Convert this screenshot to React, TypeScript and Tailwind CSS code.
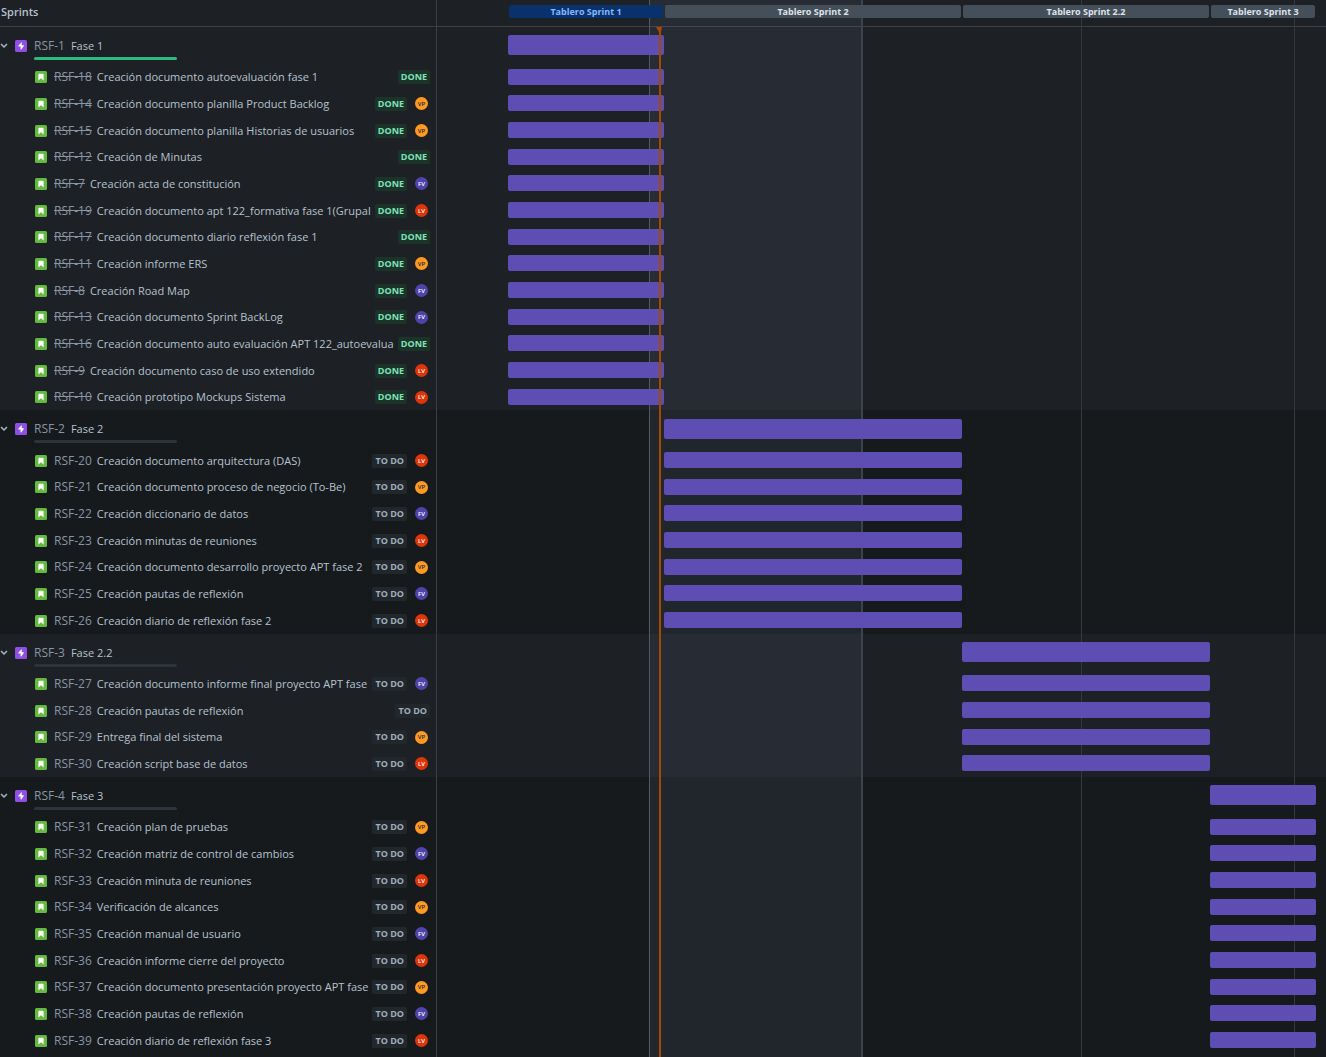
import React from "react";

type Person = "VP" | "FV" | "LV";
type Issue = { id: number; title: string; who?: Person };
type Phase = {
  id: number;
  title: string;
  done: boolean;
  start: number;
  end: number;
  surface: string;
  head: string;
  barTop: string;
  rows: string;
  issues: Issue[];
};

/* Timeline units: the visible range is 889 units wide. */
const RANGE = 889;
const pct = (n: number) => `${(n / RANGE) * 100}%`;

const phases: Phase[] = [
  {
    id: 1,
    title: "Fase 1",
    done: true,
    start: 71,
    end: 227,
    surface: "bg-[#1d2125]",
    head: "h-[37px]",
    barTop: "pt-2",
    rows: "auto-rows-[26px_27px_27px]",
    issues: [
      { id: 18, title: "Creación documento autoevaluación fase 1" },
      { id: 14, title: "Creación documento planilla Product Backlog", who: "VP" },
      { id: 15, title: "Creación documento planilla Historias de usuarios", who: "VP" },
      { id: 12, title: "Creación de Minutas" },
      { id: 7, title: "Creación acta de constitución", who: "FV" },
      { id: 19, title: "Creación documento apt 122_formativa fase 1(Grupal", who: "LV" },
      { id: 17, title: "Creación documento diario reflexión fase 1" },
      { id: 11, title: "Creación informe ERS", who: "VP" },
      { id: 8, title: "Creación Road Map", who: "FV" },
      { id: 13, title: "Creación documento Sprint BackLog", who: "FV" },
      { id: 16, title: "Creación documento auto evaluación APT 122_autoevalua" },
      { id: 9, title: "Creación documento caso de uso extendido", who: "LV" },
      { id: 10, title: "Creación prototipo Mockups Sistema", who: "LV" },
    ],
  },
  {
    id: 2,
    title: "Fase 2",
    done: false,
    start: 227,
    end: 525,
    surface: "bg-[#161a1d]",
    head: "h-[37px]",
    barTop: "pt-[9px]",
    rows: "auto-rows-[27px_26px_27px]",
    issues: [
      { id: 20, title: "Creación documento arquitectura (DAS)", who: "LV" },
      { id: 21, title: "Creación documento proceso de negocio (To-Be)", who: "VP" },
      { id: 22, title: "Creación diccionario de datos", who: "FV" },
      { id: 23, title: "Creación minutas de reuniones", who: "LV" },
      { id: 24, title: "Creación documento desarrollo proyecto APT fase 2", who: "VP" },
      { id: 25, title: "Creación pautas de reflexión", who: "FV" },
      { id: 26, title: "Creación diario de reflexión fase 2", who: "LV" },
    ],
  },
  {
    id: 3,
    title: "Fase 2.2",
    done: false,
    start: 525,
    end: 773,
    surface: "bg-[#1d2125]",
    head: "h-[36px]",
    barTop: "pt-2",
    rows: "auto-rows-[27px_27px_26px]",
    issues: [
      { id: 27, title: "Creación documento informe final proyecto APT fase", who: "FV" },
      { id: 28, title: "Creación pautas de reflexión" },
      { id: 29, title: "Entrega final del sistema", who: "VP" },
      { id: 30, title: "Creación script base de datos", who: "LV" },
    ],
  },
  {
    id: 4,
    title: "Fase 3",
    done: false,
    start: 773,
    end: 879,
    surface: "bg-[#161a1d]",
    head: "h-[37px]",
    barTop: "pt-2",
    rows: "auto-rows-[26px_27px_27px]",
    issues: [
      { id: 31, title: "Creación plan de pruebas", who: "VP" },
      { id: 32, title: "Creación matriz de control de cambios", who: "FV" },
      { id: 33, title: "Creación minuta de reuniones", who: "LV" },
      { id: 34, title: "Verificación de alcances", who: "VP" },
      { id: 35, title: "Creación manual de usuario", who: "FV" },
      { id: 36, title: "Creación informe cierre del proyecto", who: "LV" },
      { id: 37, title: "Creación documento presentación proyecto APT fase", who: "VP" },
      { id: 38, title: "Creación pautas de reflexión", who: "FV" },
      { id: 39, title: "Creación diario de reflexión fase 3", who: "LV" },
    ],
  },
];

const sprints = [
  { name: "Tablero Sprint 1", size: 156, active: true },
  { name: "Tablero Sprint 2", size: 298, active: false },
  { name: "Tablero Sprint 2.2", size: 248, active: false },
  { name: "Tablero Sprint 3", size: 106, active: false },
];

const avatarColors: Record<Person, string> = {
  VP: "bg-[#ff991f] text-[#172b4d]",
  FV: "bg-[#5243aa] text-white",
  LV: "bg-[#de350b] text-white",
};

function StoryIcon() {
  return (
    <svg className="size-3 shrink-0" viewBox="0 0 16 16" aria-hidden="true">
      <rect width="16" height="16" rx="2" fill="#63ba3c" />
      <path d="M5.500 3.500h5a1 1 0 0 1 1 1V12.500L8 9.500l-3.500 3V4.500a1 1 0 0 1 1-1z" fill="#fff" />
    </svg>
  );
}

function EpicIcon() {
  return (
    <svg className="size-3 shrink-0" viewBox="0 0 16 16" aria-hidden="true">
      <rect width="16" height="16" rx="2" fill="#904ee2" />
      <path d="M8.300 3.300 4.500 7.800c-.4.500-.1 1 .4 1H7.400v3.300c0 .8.600.9 1 .4l3.300-4.400c.4-.5.100-1-.4-1H9V3.700c0-.7-.4-.8-.7-.4z" fill="#fff" />
    </svg>
  );
}

function Chevron() {
  return (
    <svg className="h-2 w-2" viewBox="0 0 8 8" fill="none" stroke="#9fadbc" strokeWidth="1.700" strokeLinecap="round" strokeLinejoin="round" aria-hidden="true">
      <path d="M1.500 2.500 4 5l2.500-2.500" />
    </svg>
  );
}

function Status({ done }: { done: boolean }) {
  return (
    <span
      className={`flex h-[14px] shrink-0 items-center rounded-[2px] px-[3px] text-[9px] font-bold ${
        done ? "bg-[#1c3329] text-[#7ee2b8]" : "bg-[#22272b] text-[#9fadbc]"
      }`}
    >
      {done ? "DONE" : "TO DO"}
    </span>
  );
}

function IssueRow({ issue, done }: { issue: Issue; done: boolean }) {
  return (
    <li className="flex min-w-0 items-center pl-[35px]">
      <StoryIcon />
      <a href={`#RSF-${issue.id}`} className={`ml-[7px] shrink-0 text-[12px] text-[#8696a7] ${done ? "line-through" : ""}`}>
        RSF-{issue.id}
      </a>
      <span className="ml-[5px] min-w-0 flex-1 whitespace-nowrap">{issue.title}</span>
      <div className={`flex items-center gap-2 ${issue.who ? "pr-2" : "pr-[6px]"}`}>
        <Status done={done} />
        {issue.who && (
          <span className={`flex size-[13px] items-center justify-center rounded-full text-[6px] font-semibold ${avatarColors[issue.who]}`}>
            {issue.who}
          </span>
        )}
      </div>
    </li>
  );
}

function Bar({ phase, tall }: { phase: Phase; tall?: boolean }) {
  return (
    <div
      className={`relative z-10 rounded-[2px] bg-[#5e4db2] ${tall ? "h-5" : "h-4"}`}
      style={{ marginLeft: pct(phase.start), width: pct(phase.end - phase.start) }}
    />
  );
}

export default function App() {
  return (
    <main className="flex min-h-screen overflow-hidden bg-[#1d2125] font-['Open_Sans',sans-serif] text-[11px] leading-4 text-[#b6c2cf]">
      <aside className="flex w-[437px] shrink-0 flex-col border-r border-[#3a3f44]">
        <h1 className="h-[27px] border-b border-[#3a3f44] pt-1 pl-px font-semibold">Sprints</h1>
        {phases.map((phase) => (
          <section key={phase.id} className={`last:grow ${phase.surface}`}>
            <div className={`pt-[10px] ${phase.head}`}>
              <div className="flex items-center">
                <button type="button" aria-label={`Contraer ${phase.title}`} className="mr-[7px] flex h-[17px] w-2 items-center">
                  <Chevron />
                </button>
                <EpicIcon />
                <a href={`#RSF-${phase.id}`} className="ml-[7px] text-[12px] text-[#8696a7]">
                  RSF-{phase.id}
                </a>
                <span className="ml-[6px]">{phase.title}</span>
              </div>
              <div className={`mt-[3px] ml-[34px] h-[3px] w-[143px] rounded-full ${phase.done ? "bg-[#2abb7f]" : "bg-[#2c333a]"}`} />
            </div>
            <ul className={`grid ${phase.rows}`}>
              {phase.issues.map((issue) => (
                <IssueRow key={issue.id} issue={issue} done={phase.done} />
              ))}
            </ul>
          </section>
        ))}
      </aside>

      <div className="relative flex min-w-0 flex-1 flex-col">
        <header className="h-[27px] border-b border-[#3a3f44] pt-[5px]">
          <div className="relative z-10 flex" style={{ marginLeft: pct(71) }}>
            {sprints.map((s) => (
              <div key={s.name} className="shrink-0 px-px" style={{ width: `${(s.size / (RANGE - 71)) * 100}%` }}>
                <button
                  type="button"
                  className={`flex h-[13px] w-full items-center justify-center rounded-[2px] text-[9px] font-bold whitespace-nowrap ${
                    s.active ? "bg-[#09326c] text-[#85b8ff]" : "bg-[#454f59] text-[#dee4ea]"
                  }`}
                >
                  {s.name}
                </button>
              </div>
            ))}
          </div>
        </header>
        {phases.map((phase) => (
          <section key={phase.id} className={`last-of-type:grow ${phase.surface}`}>
            <div className={`${phase.barTop} ${phase.head}`}>
              <Bar phase={phase} tall />
            </div>
            <div className={`grid ${phase.rows}`}>
              {phase.issues.map((issue) => (
                <div key={issue.id} className="pt-[5px]">
                  <Bar phase={phase} />
                </div>
              ))}
            </div>
          </section>
        ))}

        <div
          className="absolute inset-y-0 border-r-2 border-l border-r-[#3b444c] border-l-[#4b5a63] bg-[#a4b4e0]/8"
          style={{ left: pct(212), width: pct(214) }}
        />
        <div className="absolute inset-y-0 w-px bg-[#34393e]" style={{ left: pct(644) }} />
        <div className="absolute inset-y-0 w-px bg-[#34393e]" style={{ left: pct(857) }} />
        <div className="absolute top-[27px] bottom-0 z-20 w-[2px] bg-[#a54800]" style={{ left: pct(222) }}>
          <svg className="absolute top-0 -left-[3px] h-[6px] w-[6px]" viewBox="0 0 6 6" aria-hidden="true">
            <path d="M0 0h6L5 5H3z" fill="#a54800" />
          </svg>
        </div>
      </div>
    </main>
  );
}
